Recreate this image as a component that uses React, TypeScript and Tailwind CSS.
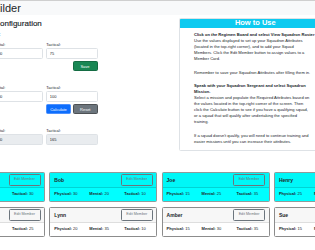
import React from "react";

type Member = { name: string; p: number; m: number; t: number };

const row1: Member[] = [
  { name: "Rick", p: 20, m: 25, t: 30 },
  { name: "Bob", p: 30, m: 20, t: 10 },
  { name: "Joe", p: 15, m: 25, t: 35 },
  { name: "Henry", p: 25, m: 20, t: 15 },
];
const row2: Member[] = [
  { name: "Tom", p: 10, m: 15, t: 25 },
  { name: "Lynn", p: 20, m: 35, t: 10 },
  { name: "Amber", p: 15, m: 30, t: 35 },
  { name: "Sue", p: 15, m: 20, t: 25 },
];

function MemberCard({ m, cyan }: { m: Member; cyan: boolean }) {
  return (
    <div
      className={
        cyan
          ? "w-[108px] h-[30px] shrink-0 flex flex-col rounded-[1.5px] border border-[#8f9a9a] bg-[#00ffff] overflow-hidden"
          : "w-[108px] h-[30px] shrink-0 flex flex-col rounded-[1.5px] border border-[#8c8c8c] bg-white overflow-hidden"
      }
    >
      <div
        className={
          cyan
            ? "h-[15px] shrink-0 flex items-center justify-between pl-[4px] pr-[3.5px] border-b border-[#00d4d4] bg-[#00f7f7]"
            : "h-[15px] shrink-0 flex items-center justify-between pl-[4px] pr-[3.5px] border-b border-[#dedede] bg-[#f7f7f7]"
        }
      >
        <span className="text-[5px] leading-[6px] font-bold">{m.name}</span>
        <button
          type="button"
          className="w-[32px] h-[11.5px] flex items-center justify-center rounded-[1.5px] border border-[#6c757d] text-[3.7px] leading-[5px] text-[#6c757d] outline-none"
        >
          Edit Member
        </button>
      </div>
      <div className="flex-1 grid grid-cols-[35px_35px_1fr] items-center pl-[4px] text-[4px] leading-[6px] whitespace-nowrap">
        <span>
          <b>Physical:</b> {m.p}
        </span>
        <span>
          <b>Mental:</b> {m.m}
        </span>
        <span>
          <b>Tactical:</b> {m.t}
        </span>
      </div>
    </div>
  );
}

function Field({ label, value, disabled }: { label: string; value: string; disabled?: boolean }) {
  return (
    <div className="flex flex-col">
      <label className="text-[4px] leading-[6px] whitespace-nowrap">{label}</label>
      <input
        readOnly
        value={value}
        className={
          disabled
            ? "w-full h-[10.4px] rounded-[1.5px] border border-[#dee2e6] bg-[#e9ecef] pl-[2.5px] text-[4px] text-[#212529] outline-none"
            : "w-full h-[10.4px] rounded-[1.5px] border border-[#dee2e6] bg-white pl-[2.5px] text-[4px] text-[#212529] outline-none"
        }
      />
    </div>
  );
}

export default function App() {
  return (
    <div className="w-[315px] h-[250px] overflow-hidden bg-white text-[#212529] font-['Liberation_Sans',Arial,sans-serif]">
      <nav className="h-[15px] border-t border-[#cfcfcf] bg-[#f8f9fa] flex items-center whitespace-nowrap">
        <span className="ml-[-48.3px] text-[11px] leading-[14px]">Squad Builder</span>
      </nav>

      <div className="flex items-start">
        <div className="ml-[-62px] w-[159.5px] shrink-0 flex flex-col">
          <h3 className="mt-[3.5px] ml-[19.3px] text-[8px] leading-[10px] font-medium whitespace-nowrap [-webkit-text-stroke:0.15px_#212529]">
            Squadron Configuration
          </h3>
          <div className="mt-[2px] w-[62.6px] flex justify-end">
            <span className="text-[6px] leading-[7px] font-bold whitespace-nowrap">Squadron Attributes:</span>
          </div>
          <div className="mt-[4.8px] grid grid-cols-3 gap-x-[3px]">
            <Field label="Physical:" value="90" />
            <Field label="Mental:" value="100" />
            <Field label="Tactical:" value="75" />
          </div>
          <div className="mt-[2.3px] flex justify-end">
            <button className="w-[25px] h-[10.3px] rounded-[1.5px] border border-[#146c43] bg-[#198754] text-white text-[4px] leading-[5px]">
              Save
            </button>
          </div>

          <div className="mt-[1.7px] w-[61.8px] flex justify-end">
            <span className="text-[6px] leading-[7px] font-bold whitespace-nowrap">Required Attributes:</span>
          </div>
          <div className="mt-[5.5px] grid grid-cols-3 gap-x-[3px]">
            <Field label="Physical:" value="100" />
            <Field label="Mental:" value="100" />
            <Field label="Tactical:" value="100" />
          </div>
          <div className="mt-[2.3px] flex justify-end gap-[2px]">
            <button className="w-[25px] h-[10.3px] rounded-[1.5px] border border-[#4b8ffd] bg-[#0d6efd] text-white text-[4px] leading-[5px]">
              Calculate
            </button>
            <button className="w-[24.5px] h-[10.3px] rounded-[1.5px] border border-[#4d5154] bg-[#6c757d] text-white text-[4px] leading-[5px]">
              Reset
            </button>
          </div>

          <div className="mt-[13.8px] grid grid-cols-3 gap-x-[3px]">
            <Field label="Physical:" value="125" disabled />
            <Field label="Mental:" value="130" disabled />
            <Field label="Tactical:" value="165" disabled />
          </div>
        </div>

        <div className="ml-[81.8px] mt-[3.3px] w-[152px] shrink-0 rounded-[1.5px] border border-[#dee2e6] overflow-hidden">
          <div className="h-[8.4px] bg-[#0dcaf0] flex items-center justify-center">
            <span className="text-[7.5px] leading-[8px] font-bold text-white">How to Use</span>
          </div>
          <div className="pl-[13.7px] pt-[4.3px] pb-[4.8px] text-[4.1px] leading-[6.1px]">
            <div className="w-[118px]">
              <p className="mb-[7.2px]">
                <strong className="whitespace-nowrap">Click on the Regimen Board and select View Squadron Roster</strong>
                <br />
                Use the values displayed to set up your Squadron Attributes (located in the top-right corner), and to
                add your Squad Members. Click the Edit Member button to assign values to a Member Card.
              </p>
              <p className="mb-[7.2px] whitespace-nowrap">Remember to save your Squadron Attributes after filling them in.</p>
              <p className="mb-[7.2px]">
                <strong>Speak with your Squadron Sergeant and select Squadron Mission.</strong>
                <br />
                Select a mission and populate the Required Attributes based on the values located in the top-right
                corner of the screen. Then click the Calculate button to see if you have a qualifying squad, or a squad
                that will qualify after undertaking the specified training.
              </p>
              <p>
                If a squad doesn't qualify, you will need to continue training and easier missions until you can
                increase their attributes.
              </p>
            </div>
          </div>
        </div>
      </div>

      <div className="mt-[21px] ml-[-63px] flex flex-col gap-[5px]">
        <div className="flex gap-[4.3px]">
          {row1.map((m) => (
            <MemberCard key={m.name} m={m} cyan />
          ))}
        </div>
        <div className="flex gap-[4.3px]">
          {row2.map((m) => (
            <MemberCard key={m.name} m={m} cyan={false} />
          ))}
        </div>
      </div>
    </div>
  );
}
